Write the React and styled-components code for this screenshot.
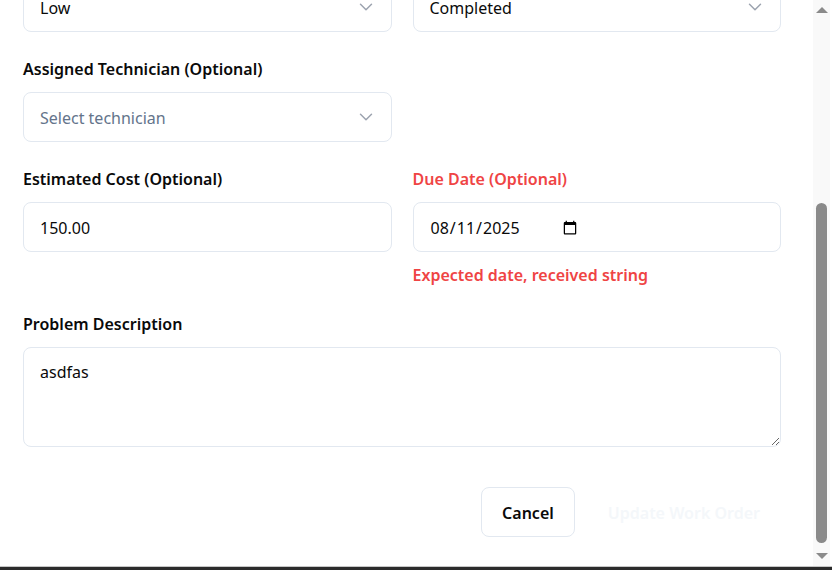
import React, { useLayoutEffect, useRef, useState } from "react";
import styled, { createGlobalStyle } from "styled-components";
import { ChevronDown } from "lucide-react";

const GlobalStyle = createGlobalStyle`
  html, body {
    margin: 0;
    padding: 0;
    background: #2b2b2b;
  }
  * { box-sizing: border-box; }
`;

const thumbGray = "#8a8a8a";
const railGray = "#f9f9f9";

const Frame = styled.div`
  width: 832px;
  height: 570px;
  display: flex;
  flex-direction: column;
  background: #2b2b2b;
`;

const Window = styled.div`
  height: 567px;
  display: flex;
  background: #ffffff;
  border-bottom: 1px solid #c6c6c6;
  padding-right: 2px;
`;

const Viewport = styled.div`
  width: 813px;
  height: 566px;
  overflow-y: auto;
  scrollbar-width: none;
  font-family: "Segoe UI", "Noto Sans", sans-serif;
  color: #0a0a0a;

  &::-webkit-scrollbar {
    display: none;
  }
`;

const Rail = styled.div`
  width: 17px;
  height: 566px;
  display: flex;
  flex-direction: column;
  background: ${railGray};
`;

const Arrow = styled.div`
  height: 20px;
  display: flex;
  align-items: center;
  justify-content: center;

  &::before {
    content: "";
    width: 0;
    height: 0;
    border-left: 6px solid transparent;
    border-right: 6px solid transparent;
    ${({ $down }) =>
      $down
        ? `border-top: 6px solid ${thumbGray};`
        : `border-bottom: 6px solid ${thumbGray};`}
  }
`;

const Track = styled.div`
  flex: 1;
  padding-bottom: 3px;
  display: flex;
  flex-direction: column;
`;

const Thumb = styled.div`
  width: 11px;
  margin-left: 3px;
  border-radius: 6px;
  background: ${thumbGray};
`;

const Form = styled.form`
  padding: 24px 32px 29px 23px;
`;

const Header = styled.div`
  padding-bottom: 16px;
  border-bottom: 1px solid #eef2f6;
  margin-bottom: 24px;
`;

const Title = styled.h2`
  margin: 0;
  font-size: 20px;
  line-height: 28px;
  font-weight: 600;
`;

const Meta = styled.div`
  font-size: 13px;
  line-height: 20px;
  color: #94a3b8;
`;

const Subtitle = styled.p`
  margin: 6px 0 0;
  font-size: 15px;
  line-height: 22px;
  color: #64748b;
`;

const Fields = styled.div`
  display: grid;
  grid-template-columns: 1fr 1fr;
  column-gap: 21px;
  row-gap: 24px;
`;

const Field = styled.div`
  display: flex;
  flex-direction: column;
  grid-column: ${({ $wide }) => ($wide ? "1 / -1" : "auto")};
`;

const Label = styled.label`
  font-size: 16px;
  line-height: 24px;
  padding-top: 1px;
  font-weight: 600;
  margin-bottom: 11px;
  color: ${({ $error }) => ($error ? "#ef4444" : "#0a0a0a")};
`;

const SelectBox = styled.button`
  height: 50px;
  width: 100%;
  display: flex;
  align-items: center;
  justify-content: space-between;
  padding: 2px 14px 0 16px;
  border: 1px solid #e2e8f0;
  border-radius: 8px;
  background: #ffffff;
  font: inherit;
  font-size: 16px;
  color: ${({ $placeholder }) => ($placeholder ? "#64748b" : "#0a0a0a")};
  text-align: left;

  svg {
    color: #9ca3af;
    flex-shrink: 0;
    margin-top: -2px;
  }
`;

const Input = styled.input`
  height: 50px;
  width: 100%;
  padding: 2px 16px 0;
  border: 1px solid #e2e8f0;
  border-radius: 8px;
  background: #ffffff;
  font: inherit;
  font-size: 16px;
  color: #0a0a0a;
  outline: none;

  &::-webkit-datetime-edit {
    flex: 0 0 auto;
  }
  &::-webkit-calendar-picker-indicator {
    margin-left: 7px;
  }
`;

const TextArea = styled.textarea`
  height: 100px;
  width: 100%;
  padding: 12px 16px 10px;
  border: 1px solid #e2e8f0;
  border-radius: 8px;
  background: #ffffff;
  font: inherit;
  font-size: 16px;
  line-height: 24px;
  color: #0a0a0a;
  outline: none;
`;

const ErrorText = styled.p`
  margin: 11px 0 0;
  font-size: 16px;
  line-height: 24px;
  font-weight: 600;
  color: #ef4444;
`;

const Actions = styled.div`
  display: flex;
  justify-content: flex-end;
  gap: 12px;
  margin-top: 40px;
`;

const Button = styled.button`
  height: 50px;
  padding: 1px 20px 0;
  border-radius: 8px;
  font: inherit;
  font-size: 16px;
  font-weight: 600;
  border: 1px solid ${({ $primary }) => ($primary ? "transparent" : "#e2e8f0")};
  background: #ffffff;
  color: ${({ $primary }) => ($primary ? "#f4f7fa" : "#0a0a0a")};
  cursor: ${({ disabled }) => (disabled ? "default" : "pointer")};
`;

function Select({ value, placeholder }) {
  return (
    <SelectBox type="button" $placeholder={!value}>
      <span>{value || placeholder}</span>
      <ChevronDown size={22} strokeWidth={1.6} />
    </SelectBox>
  );
}

export default function App() {
  const scrollRef = useRef(null);
  const trackRef = useRef(null);
  const [thumb, setThumb] = useState({ top: 0, height: 0 });

  const measure = () => {
    const el = scrollRef.current;
    const track = trackRef.current;
    if (!el || !track) return;
    const trackH = track.clientHeight - 3;
    const ratio = el.clientHeight / el.scrollHeight;
    const height = Math.round(trackH * ratio);
    const max = el.scrollHeight - el.clientHeight;
    const top = max > 0 ? Math.round((trackH - height) * (el.scrollTop / max)) : 0;
    setThumb({ top, height });
  };

  useLayoutEffect(() => {
    const el = scrollRef.current;
    if (el) el.scrollTop = el.scrollHeight;
    measure();
  }, []);

  return (
    <>
      <GlobalStyle />
      <Frame>
        <Window>
          <Viewport ref={scrollRef} onScroll={measure}>
            <Form onSubmit={(e) => e.preventDefault()}>
              <Header>
                <Title>Edit Work Order</Title>
                <Meta>WO-2025-0142 · Created Aug 4, 2025</Meta>
                <Subtitle>Update the details of this work order below.</Subtitle>
              </Header>
              <Fields>
                <Field>
                  <Label>Title</Label>
                  <Input defaultValue="Replace hydraulic pump seal" />
                </Field>
                <Field>
                  <Label>Equipment</Label>
                  <Select value="Hydraulic Press #2" />
                </Field>
                <Field>
                  <Label>Priority</Label>
                  <Select value="Low" />
                </Field>
                <Field>
                  <Label>Status</Label>
                  <Select value="Completed" />
                </Field>
                <Field>
                  <Label>Assigned Technician (Optional)</Label>
                  <Select placeholder="Select technician" />
                </Field>
                <div />
                <Field>
                  <Label>Estimated Cost (Optional)</Label>
                  <Input type="number" step="0.01" defaultValue="150.00" />
                </Field>
                <Field>
                  <Label $error>Due Date (Optional)</Label>
                  <Input type="date" defaultValue="2025-08-11" />
                  <ErrorText>Expected date, received string</ErrorText>
                </Field>
                <Field $wide>
                  <Label>Problem Description</Label>
                  <TextArea defaultValue="asdfas" />
                </Field>
              </Fields>
              <Actions>
                <Button type="button">Cancel</Button>
                <Button type="submit" $primary disabled>
                  Update Work Order
                </Button>
              </Actions>
            </Form>
          </Viewport>
          <Rail>
            <Arrow />
            <Track ref={trackRef}>
              <Thumb style={{ marginTop: thumb.top, height: thumb.height }} />
            </Track>
            <Arrow $down />
          </Rail>
        </Window>
      </Frame>
    </>
  );
}
